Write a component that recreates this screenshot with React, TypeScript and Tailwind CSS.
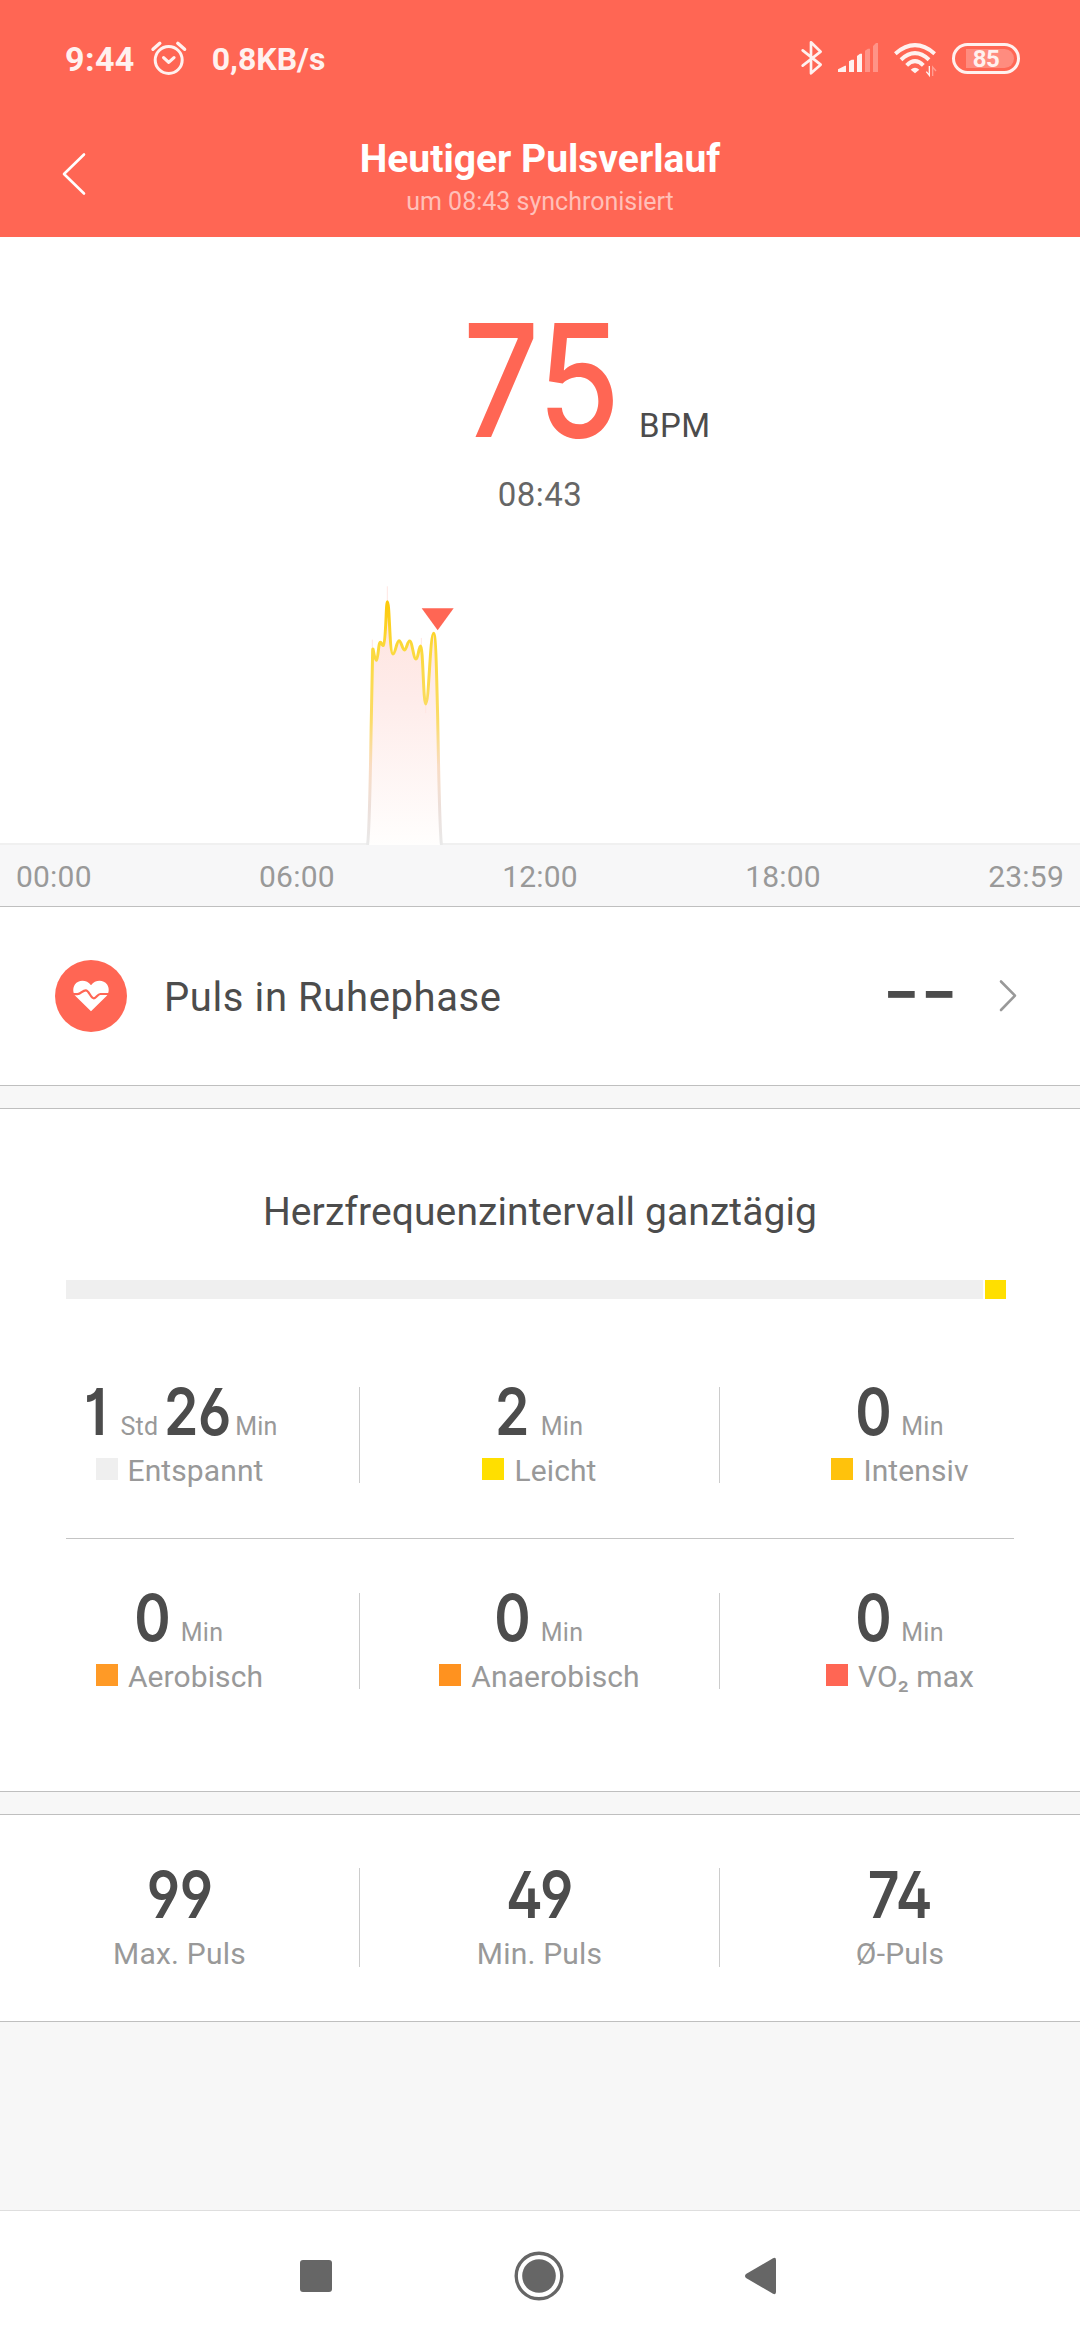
import type { ReactNode } from 'react';

const INK = '#fff1ef';

function Digits({ box, size, children }: { box: string; size: string; children: ReactNode }) {
  return (
    <span className={`inline-flex justify-center ${box}`}>
      <span
        className={`inline-block origin-center whitespace-nowrap font-['Inter',sans-serif] ${size}`}
        style={{ fontFeatureSettings: "'ss01','cv01','cv02','cv03','cv04'" }}
      >
        {children}
      </span>
    </span>
  );
}

const SMALL = 'scale-x-[0.85] text-[65px] leading-[50px] font-[570] tracking-[-0.5px]';

function StatusBar() {
  return (
    <div className="flex h-[118px] items-center justify-between pr-[60px] pl-[65px] text-[#fff1ef]">
      <div className="flex items-center">
        <span className="text-[34px] leading-10 font-bold tracking-[0.4px]">9:44</span>
        <svg className="ml-[14px]" width="40" height="40" viewBox="149 39 40 40" fill="none" stroke={INK} strokeWidth="3" strokeLinecap="round" strokeLinejoin="round">
          <circle cx="168.7" cy="60" r="13.5" />
          <path d="M163.6 57.6 168.7 62.4 174 57.6" strokeWidth="3.2" />
          <path d="M153 49.3 159.8 43.3M177.8 43.3 184.6 49.3" strokeWidth="3.4" />
        </svg>
        <span className="ml-[23px] text-[32px] leading-10 font-bold">0,8KB/s</span>
      </div>
      <div className="flex items-center gap-4">
        <svg width="20" height="40" viewBox="36 57 60 120" fill="none" stroke={INK} strokeWidth="8" strokeLinecap="round" strokeLinejoin="round" overflow="visible">
          <path d="M38 91 92 134 63 160V67L92 95 38 137" />
        </svg>
        <svg width="40" height="40" viewBox="144 57 120 120" fill={INK}>
          <path d="M144 156V148L150 145 165 137H168V156ZM177 156V124L185 119H192V156ZM201 156V108L210 101H216V156Z" />
          <path d="M225 156V92L234 86H240V156ZM249 156V78L258 69H264V156Z" opacity="0.33" />
        </svg>
        <svg width="42" height="40" viewBox="312 57 126 120" fill="none" stroke={INK} strokeWidth="12" overflow="visible">
          <path d="M316 101Q375 50 434 101" />
          <path d="M333 119Q375 80 417 119" />
          <path d="M350 136Q375 111 400 136" />
          <path d="M362 149Q375 137 388 149L375 160Z" fill={INK} stroke="none" />
          <path d="M418 138V166L409 155" strokeWidth="4" />
          <path d="M428 168V141L438 153" strokeWidth="4" opacity="0.4" />
        </svg>
        <div className="relative flex h-[31px] w-[68px] -translate-y-px items-center justify-center rounded-full border-[3px] border-[#fff1ef]">
          <div className="absolute top-[3px] bottom-[3px] left-[11px] w-[48px] rounded-r-full bg-white/25" />
          <span className="relative mt-px text-[24px] leading-6 font-bold tracking-[-0.5px]">85</span>
        </div>
      </div>
    </div>
  );
}

function Header() {
  return (
    <header className="h-[237px] bg-[#ff6654] text-white">
      <StatusBar />
      <div className="flex h-[119px]">
        <div className="w-[160px] pt-8 pl-[60px]">
          <svg width="30" height="48" viewBox="60 150 30 48" fill="none" stroke="#fff" strokeWidth="2.6" strokeLinecap="round" strokeLinejoin="round">
            <path d="M84 154.5 64 174 84 193.5" />
          </svg>
        </div>
        <div className="flex flex-1 flex-col items-center pt-[18px]">
          <h1 className="text-[39px] leading-[46px] font-bold">Heutiger Pulsverlauf</h1>
          <p className="mt-[5px] text-[25px] leading-[30px] text-white/60">um 08:43 synchronisiert</p>
        </div>
        <div className="w-[160px]" />
      </div>
    </header>
  );
}

function PulseChart() {
  return (
    <svg className="mt-[55px] block" width="1080" height="275" viewBox="0 0 1080 275">
      <defs>
        <linearGradient id="area" gradientUnits="userSpaceOnUse" x1="0" y1="95" x2="0" y2="825">
          <stop offset="0" stopColor="#ffe3de" />
          <stop offset="0.4" stopColor="#feecea" />
          <stop offset="1" stopColor="#fffefd" />
        </linearGradient>
        <linearGradient id="line" gradientUnits="userSpaceOnUse" x1="0" y1="90" x2="0" y2="822">
          <stop offset="0" stopColor="#fdc908" />
          <stop offset="0.2" stopColor="#fbd93c" />
          <stop offset="0.5" stopColor="#fbdc6a" />
          <stop offset="0.68" stopColor="#f9dcc4" />
          <stop offset="0.85" stopColor="#ecdfda" />
          <stop offset="1" stopColor="#e9e9e9" />
        </linearGradient>
      </defs>
      <rect x="0" y="273" width="1080" height="2" fill="#f0f0f0" />
      <g transform="translate(340 0) scale(0.33333)" strokeLinejoin="round" strokeLinecap="round">
        <path
          d="M83 825C88 780 90 660 92 560C94 440 96 300 98 240C99 225 103 272 109 271C115 268 115 217 121 217C125 217 126 228 130 226C138 218 138 95 142 95C149 95 148 252 159 252C166 252 170 212 177 212C184 212 187 240 193 240C200 240 202 213 209 213C217 213 220 267 228 267C235 267 236 228 242 228C249 228 250 402 257 402C267 402 270 190 281 190C288 190 290 330 293 440C296 600 298 760 304 825Z"
          fill="url(#area)"
        />
        <path d="M142 50V100M97 210V235M244 205V235M257 402V428" stroke="#ffe6e2" strokeWidth="3" />
        <path
          d="M83 822C88 780 90 660 92 560C94 440 96 300 98 240C99 225 103 272 109 271C115 268 115 217 121 217C125 217 126 228 130 226C138 218 138 95 142 95C149 95 148 252 159 252C166 252 170 212 177 212C184 212 187 240 193 240C200 240 202 213 209 213C217 213 220 267 228 267C235 267 236 228 242 228C249 228 250 402 257 402C267 402 270 190 281 190C288 190 290 330 293 440C296 600 298 760 304 822"
          fill="none"
          stroke="url(#line)"
          strokeWidth="9"
        />
        <path d="M245 115H341L293 181Z" fill="#ff6654" />
      </g>
    </svg>
  );
}

function Unit({ children, gap }: { children: ReactNode; gap: string }) {
  return <span className={`text-[25px] leading-none tracking-[0.2px] text-[#999999] ${gap}`}>{children}</span>;
}

function Zone({ color, label, children }: { color: string; label: string; children?: ReactNode }) {
  return (
    <div className="flex flex-col items-center">
      <div className="flex h-12 items-baseline">{children}</div>
      <div className="mt-[22px] flex h-[26px] items-center gap-[10px]">
        <span className={`-mt-[2px] size-[22px] ${color}`} />
        <span className="mt-px text-[30px] leading-[26px] tracking-[0.1px] whitespace-nowrap text-[#999999]">{label}</span>
      </div>
    </div>
  );
}

function Minutes({ value }: { value: string }) {
  return (
    <>
      <Digits box="ml-[2px] w-[29px]" size={SMALL}>{value}</Digits>
      <Unit gap="ml-[14px]">Min</Unit>
    </>
  );
}

function Total({ value, label }: { value: string; label: string }) {
  return (
    <div className="flex flex-col items-center pt-[2px]">
      <Digits box="h-12 w-[63px]" size={SMALL}>{value}</Digits>
      <span className="mt-[23px] text-[30px] leading-[26px] tracking-[0.2px] text-[#999999]">{label}</span>
    </div>
  );
}

export default function App() {
  return (
    <div className="flex h-[2340px] w-[1080px] flex-col overflow-hidden bg-[#f7f7f7] font-['Roboto',sans-serif] text-[#4c4c4c]">
      <Header />

      <section className="bg-white pt-[65px]">
        <div className="grid grid-cols-[1fr_180px_1fr] items-baseline">
          <span />
          <Digits box="w-[184px] text-[#ff6654]" size="scale-x-[0.85] text-[157px] leading-[157px] font-medium">75</Digits>
          <span className="pl-[9px] text-[33px] leading-none tracking-[0.4px]">BPM</span>
        </div>
        <p className="mt-4 text-center text-[33px] leading-10 tracking-[0.5px] text-[#666666]">08:43</p>
        <PulseChart />
      </section>

      <div className="flex h-[62px] items-center justify-between border-b border-[#bfbfbf] bg-[#f7f7f8] px-4 pt-[2px] text-[30px] leading-9 tracking-[0.2px] text-[#999999]">
        <span>00:00</span>
        <span>06:00</span>
        <span>12:00</span>
        <span>18:00</span>
        <span>23:59</span>
      </div>

      <section className="flex h-[179px] items-center border-b border-[#bfbfbf] bg-white pr-[62px] pl-[55px]">
        <div className="flex size-[72px] items-center justify-center rounded-full bg-[#ff6654]">
          <svg width="38" height="34" viewBox="71.6 981 38 34">
            <path d="M90.6 1013.3 75.3 998.3C72.5 995.5 72 990 74.5 986.5C78.5 981.3 86.5 981.8 90.6 987.2C94.7 981.8 102.7 981.3 106.7 986.5C109.2 990 108.7 995.5 105.9 998.3Z" fill="#fff" />
            <path d="M71 996.2H77C80.5 996.2 82 992.3 85.4 992.3C88.8 992.3 90 1000.3 93.5 1000.3C96 1000.3 97 996 100 996H111" fill="none" stroke="#ff6654" strokeWidth="2.2" />
          </svg>
        </div>
        <span className="mt-1 ml-[37px] text-[40px] leading-[48px] tracking-[0.6px]">Puls in Ruhephase</span>
        <Digits box="-mt-[11px] ml-auto mr-[45px] w-[66px]" size="scale-x-[1.25] text-[65px] leading-[65px] font-semibold">--</Digits>
        <svg width="20" height="36" viewBox="998 978 20 36" fill="none" stroke="#999999" strokeWidth="2.6" strokeLinecap="round" strokeLinejoin="round">
          <path d="M1001 981.5 1015 995.7 1001 1010" />
        </svg>
      </section>

      <section className="mt-[22px] h-[684px] border-y border-[#bfbfbf] bg-white pt-20">
        <h2 className="text-center text-[39px] leading-[46px] tracking-[0.1px]">Herzfrequenzintervall ganztägig</h2>
        <div className="mt-[45px] mr-[74px] ml-[66px] flex h-[19px] gap-[2px]">
          <div className="flex-1 bg-[#efefef]" />
          <div className="w-[21px] bg-[#ffdf00]" />
        </div>
        <div className="mt-[88px] grid h-24 grid-cols-3 divide-x divide-[#cccccc]">
          <Zone color="bg-[#efefef]" label="Entspannt">
            <Digits box="ml-[6px] w-4" size={SMALL}>1</Digits>
            <Unit gap="ml-[17px]">Std</Unit>
            <Digits box="ml-2 w-[62px]" size={SMALL}>26</Digits>
            <Unit gap="ml-[7px]">Min</Unit>
          </Zone>
          <Zone color="bg-[#ffdf00]" label="Leicht"><Minutes value="2" /></Zone>
          <Zone color="bg-[#ffc20c]" label="Intensiv"><Minutes value="0" /></Zone>
        </div>
        <div className="mx-[66px] mt-[55px] h-px bg-[#c4c4c4]" />
        <div className="mt-[54px] grid h-24 grid-cols-3 divide-x divide-[#cccccc]">
          <Zone color="bg-[#ff9a26]" label="Aerobisch"><Minutes value="0" /></Zone>
          <Zone color="bg-[#ff921f]" label="Anaerobisch"><Minutes value="0" /></Zone>
          <Zone color="bg-[#ff6654]" label="VO₂ max"><Minutes value="0" /></Zone>
        </div>
      </section>

      <section className="mt-[22px] h-[208px] border-y border-[#bfbfbf] bg-white pt-[53px]">
        <div className="grid h-[99px] grid-cols-3 divide-x divide-[#cccccc]">
          <Total value="99" label="Max. Puls" />
          <Total value="49" label="Min. Puls" />
          <Total value="74" label="Ø-Puls" />
        </div>
      </section>

      <nav className="mt-auto flex h-[130px] items-center border-t border-[#dedede] bg-white pl-[300px]">
        <span className="size-8 rounded-[3px] bg-[#666666]" />
        <svg className="ml-[182px]" width="50" height="50" viewBox="0 0 50 50">
          <circle cx="25" cy="25" r="22.8" fill="none" stroke="#666666" strokeWidth="3.4" />
          <circle cx="25" cy="25" r="16.8" fill="#666666" />
        </svg>
        <svg className="ml-[180px]" width="33" height="38" viewBox="0 0 33 38">
          <path d="M2 17 29 1.2Q32 0 32 3V35Q32 38 29 36.8L2 21Q0 19 2 17Z" fill="#666666" />
        </svg>
      </nav>
    </div>
  );
}
